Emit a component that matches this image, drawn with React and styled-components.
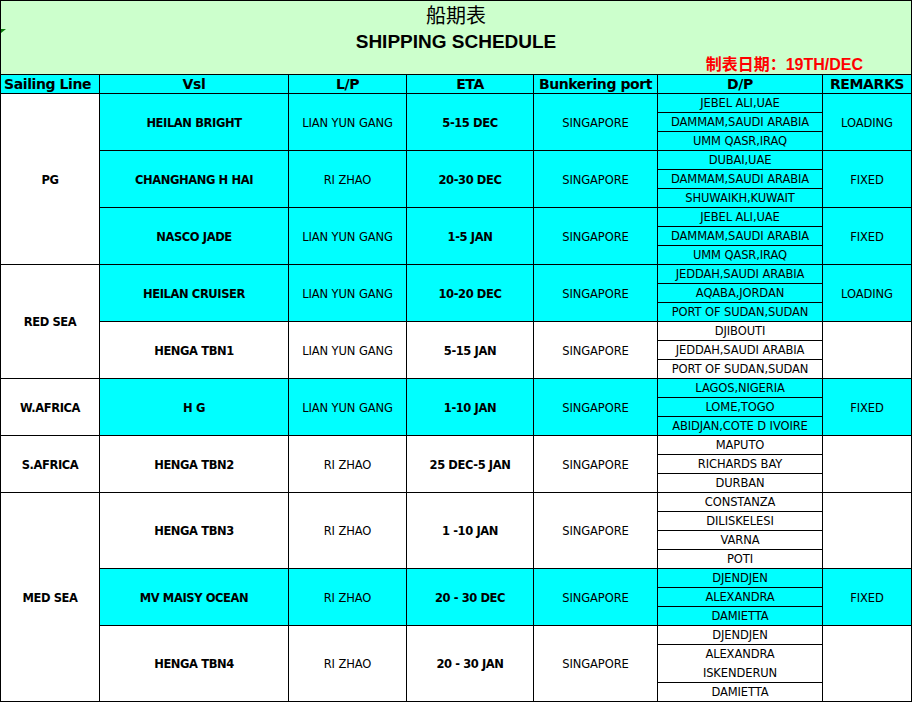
import React from 'react';
import styled, { createGlobalStyle } from 'styled-components';

const GlobalStyle = createGlobalStyle`
  body {
    margin: 0;
    background: #fff;
    font-family: 'DejaVu Sans', 'Liberation Sans', sans-serif;
    color: #000;
  }
`;

const Sheet = styled.div`
  width: 912px;
  box-sizing: border-box;
  border-left: 1px solid #000;
`;

const TitleBlock = styled.div`
  position: relative;
  height: 75px;
  box-sizing: border-box;
  border-top: 1px solid #000;
  border-bottom: 1px solid #000;
  border-right: 1px solid #000;
  background: #ccffcc;
  display: flex;
  flex-direction: column;
  align-items: center;
`;

const Marker = styled.span`
  position: absolute;
  left: 0;
  top: 28px;
  width: 0;
  height: 0;
  border-top: 4px solid #0b7a0b;
  border-right: 5px solid transparent;
`;

const CnTitle = styled.div`
  font-family: 'Noto Sans CJK SC', sans-serif;
  font-size: 20px;
  line-height: 28px;
`;

const EnTitle = styled.div`
  font-family: 'Liberation Sans', Arial, sans-serif;
  font-weight: bold;
  font-size: 19px;
  line-height: 26px;
`;

const DateLine = styled.div`
  align-self: flex-end;
  margin-right: 48px;
  font-family: 'Liberation Sans', 'Noto Sans CJK SC', sans-serif;
  font-weight: bold;
  font-size: 16px;
  line-height: 20px;
  color: #ff0000;
`;

const Grid = styled.div`
  display: grid;
  grid-template-columns: 99px 189px 118px 127px 124px 165px 89px;
`;

const HeadCell = styled.div`
  height: 19px;
  box-sizing: border-box;
  border-right: 1px solid #000;
  border-bottom: 1px solid #000;
  background: #00ffff;
  font-weight: bold;
  font-size: 14px;
  letter-spacing: -0.4px;
  line-height: 19px;
  text-align: ${(p) => (p.$left ? 'left' : 'center')};
  padding-left: ${(p) => (p.$left ? '3px' : '0')};
  white-space: nowrap;
`;

const Cell = styled.div`
  display: flex;
  align-items: center;
  justify-content: center;
  box-sizing: border-box;
  padding-top: 1px;
  border-right: 1px solid #000;
  border-bottom: 1px solid #000;
  background: ${(p) => (p.$hi ? '#00ffff' : '#fff')};
  font-size: 11.5px;
  font-weight: ${(p) => (p.$bold ? 'bold' : 'normal')};
  letter-spacing: ${(p) => (p.$bold ? '-0.4px' : '-0.1px')};
  white-space: nowrap;
`;

const LineCell = styled(Cell)`
  grid-column: 1;
  grid-row: span ${(p) => p.$span};
`;

const DpCell = styled(Cell)`
  flex-direction: column;
  align-items: stretch;
  justify-content: flex-start;
  padding-top: 0;
`;

const DpItem = styled.div`
  height: 19px;
  box-sizing: border-box;
  border-bottom: 1px solid ${(p) => (p.$joined ? 'transparent' : '#000')};
  line-height: 19px;
  text-align: center;

  &:last-child {
    height: 18px;
    border-bottom: none;
  }
`;

const headers = ['Sailing Line', 'Vsl', 'L/P', 'ETA', 'Bunkering port', 'D/P', 'REMARKS'];

const schedule = [
  {
    line: 'PG',
    vessels: [
      { name: 'HEILAN BRIGHT', lp: 'LIAN YUN GANG', eta: '5-15 DEC', dp: ['JEBEL ALI,UAE', 'DAMMAM,SAUDI ARABIA', 'UMM QASR,IRAQ'], remark: 'LOADING', hi: true },
      { name: 'CHANGHANG H HAI', lp: 'RI ZHAO', eta: '20-30 DEC', dp: ['DUBAI,UAE', 'DAMMAM,SAUDI ARABIA', 'SHUWAIKH,KUWAIT'], remark: 'FIXED', hi: true },
      { name: 'NASCO JADE', lp: 'LIAN YUN GANG', eta: '1-5 JAN', dp: ['JEBEL ALI,UAE', 'DAMMAM,SAUDI ARABIA', 'UMM QASR,IRAQ'], remark: 'FIXED', hi: true },
    ],
  },
  {
    line: 'RED SEA',
    vessels: [
      { name: 'HEILAN CRUISER', lp: 'LIAN YUN GANG', eta: '10-20 DEC', dp: ['JEDDAH,SAUDI ARABIA', 'AQABA,JORDAN', 'PORT OF SUDAN,SUDAN'], remark: 'LOADING', hi: true },
      { name: 'HENGA TBN1', lp: 'LIAN YUN GANG', eta: '5-15 JAN', dp: ['DJIBOUTI', 'JEDDAH,SAUDI ARABIA', 'PORT OF SUDAN,SUDAN'] },
    ],
  },
  {
    line: 'W.AFRICA',
    vessels: [
      { name: 'H G', lp: 'LIAN YUN GANG', eta: '1-10 JAN', dp: ['LAGOS,NIGERIA', 'LOME,TOGO', 'ABIDJAN,COTE D IVOIRE'], remark: 'FIXED', hi: true },
    ],
  },
  {
    line: 'S.AFRICA',
    vessels: [
      { name: 'HENGA TBN2', lp: 'RI ZHAO', eta: '25 DEC-5 JAN', dp: ['MAPUTO', 'RICHARDS BAY', 'DURBAN'] },
    ],
  },
  {
    line: 'MED SEA',
    vessels: [
      { name: 'HENGA TBN3', lp: 'RI ZHAO', eta: '1 -10 JAN', dp: ['CONSTANZA', 'DILISKELESI', 'VARNA', 'POTI'] },
      { name: 'MV MAISY OCEAN', lp: 'RI ZHAO', eta: '20 - 30 DEC', dp: ['DJENDJEN', 'ALEXANDRA', 'DAMIETTA'], remark: 'FIXED', hi: true },
      { name: 'HENGA TBN4', lp: 'RI ZHAO', eta: '20 - 30 JAN', dp: ['DJENDJEN', 'ALEXANDRA', 'ISKENDERUN', 'DAMIETTA'], joined: [1] },
    ],
  },
];

const App = () => {
  return (
    <>
      <GlobalStyle />
      <Sheet>
        <TitleBlock>
          <Marker />
          <CnTitle>船期表</CnTitle>
          <EnTitle>SHIPPING SCHEDULE</EnTitle>
          <DateLine>制表日期：19TH/DEC</DateLine>
        </TitleBlock>
        <Grid>
          {headers.map((h, i) => (
            <HeadCell key={h} $left={i === 0}>{h}</HeadCell>
          ))}
          {schedule.map((group) => (
            <React.Fragment key={group.line}>
              <LineCell $span={group.vessels.length} $bold>{group.line}</LineCell>
              {group.vessels.map((v) => (
                <React.Fragment key={v.name}>
                  <Cell $hi={v.hi} $bold>{v.name}</Cell>
                  <Cell $hi={v.hi}>{v.lp}</Cell>
                  <Cell $hi={v.hi} $bold>{v.eta}</Cell>
                  <Cell $hi={v.hi}>SINGAPORE</Cell>
                  <DpCell $hi={v.hi}>
                    {v.dp.map((d, i) => (
                      <DpItem key={i} $joined={v.joined && v.joined.includes(i)}>{d}</DpItem>
                    ))}
                  </DpCell>
                  <Cell $hi={v.hi}>{v.remark}</Cell>
                </React.Fragment>
              ))}
            </React.Fragment>
          ))}
        </Grid>
      </Sheet>
    </>
  );
};

export default App;
